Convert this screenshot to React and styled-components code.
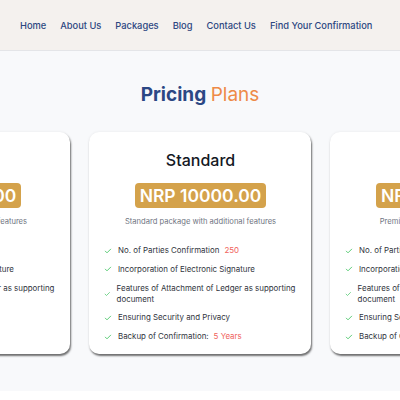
import React from 'react';
import styled, { createGlobalStyle } from 'styled-components';

const GlobalStyle = createGlobalStyle`
  body {
    margin: 0;
    background: #ffffff;
    font-family: Inter, "Liberation Sans", sans-serif;
  }
`;

const Header = styled.header`
  height: 50px;
  background: #f4f1ee;
  border-bottom: 1px solid #e4e5e8;
  display: flex;
  align-items: center;
  padding-left: 20px;
`;

const NavLink = styled.a`
  font-size: 9.3px;
  font-weight: 500;
  color: #2d4781;
  margin-right: 14px;
  text-decoration: none;
  white-space: nowrap;
`;

const Section = styled.section`
  background: #f8f9fb;
  padding: 30px 0 37px;
  overflow: hidden;
`;

const Title = styled.h2`
  margin: 0 0 23px;
  text-align: center;
  font-size: 19px;
  line-height: 28px;
  font-weight: 700;
  color: #2b4784;

  span {
    font-weight: 400;
    color: #ee8a47;
  }
`;

const Row = styled.div`
  display: flex;
  justify-content: center;
  gap: 19px;
`;

const Card = styled.div`
  flex: 0 0 222px;
  box-sizing: border-box;
  background: #fff;
  border-radius: 10px;
  padding: 18px 14px 12px 15px;
  box-shadow: 1px 2px 2px rgba(0, 0, 0, 0.55), 0 0 3px rgba(0, 0, 0, 0.07);
  display: flex;
  flex-direction: column;
  align-items: center;
`;

const PlanName = styled.h3`
  margin: 0;
  font-size: 16px;
  line-height: 20px;
  font-weight: 500;
  color: #141824;
`;

const Price = styled.div`
  margin-top: 13px;
  background: #d4a24b;
  color: #fff;
  border-radius: 4px;
  padding: 0 5px;
  font-size: 17.5px;
  line-height: 25px;
  font-weight: 600;
  white-space: nowrap;
`;

const Desc = styled.p`
  margin: 9px 0 0;
  font-size: 7.6px;
  line-height: 10px;
  color: #707582;
  white-space: nowrap;
`;

const Features = styled.ul`
  list-style: none;
  margin: 18px 0 0;
  padding: 0;
  align-self: stretch;
  display: flex;
  flex-direction: column;
  gap: 7.8px;
`;

const Feature = styled.li`
  display: flex;
  align-items: center;
  gap: 6px;
  font-size: 7.9px;
  line-height: 11px;
  color: #30343d;
`;

const Check = styled.svg`
  width: 8px;
  height: 8px;
  color: #43c463;
`;

const Highlight = styled.span`
  color: #f0625c;
  margin-left: 5px;
`;

const plans = [
  {
    name: 'Basic',
    price: 'NRP 5000.00',
    desc: 'Basic package with essential features',
    parties: '100',
    years: '1 Year',
  },
  {
    name: 'Standard',
    price: 'NRP 10000.00',
    desc: 'Standard package with additional features',
    parties: '250',
    years: '5 Years',
  },
  {
    name: 'Premium',
    price: 'NRP 15000.00',
    desc: 'Premium package with all features',
    parties: '500',
    years: '10 Years',
  },
];

const CheckIcon = () => (
  <Check viewBox="0 0 24 24" fill="none" stroke="currentColor" strokeWidth="2.6" strokeLinecap="round" strokeLinejoin="round">
    <path d="M4 12.5l5 5L20 6.5" />
  </Check>
);

export default function App() {
  return (
    <>
      <GlobalStyle />
      <Header>
        {['Home', 'About Us', 'Packages', 'Blog', 'Contact Us', 'Find Your Confirmation'].map((l) => (
          <NavLink key={l} href="#">{l}</NavLink>
        ))}
      </Header>
      <Section>
        <Title>
          Pricing <span>Plans</span>
        </Title>
        <Row>
          {plans.map((p) => (
            <Card key={p.name}>
              <PlanName>{p.name}</PlanName>
              <Price>{p.price}</Price>
              <Desc>{p.desc}</Desc>
              <Features>
                <Feature>
                  <CheckIcon />
                  <span>No. of Parties Confirmation<Highlight>{p.parties}</Highlight></span>
                </Feature>
                <Feature>
                  <CheckIcon />
                  <span>Incorporation of Electronic Signature</span>
                </Feature>
                <Feature>
                  <CheckIcon />
                  <span>Features of Attachment of Ledger as supporting document</span>
                </Feature>
                <Feature>
                  <CheckIcon />
                  <span>Ensuring Security and Privacy</span>
                </Feature>
                <Feature>
                  <CheckIcon />
                  <span>Backup of Confirmation:<Highlight>{p.years}</Highlight></span>
                </Feature>
              </Features>
            </Card>
          ))}
        </Row>
      </Section>
    </>
  );
}
